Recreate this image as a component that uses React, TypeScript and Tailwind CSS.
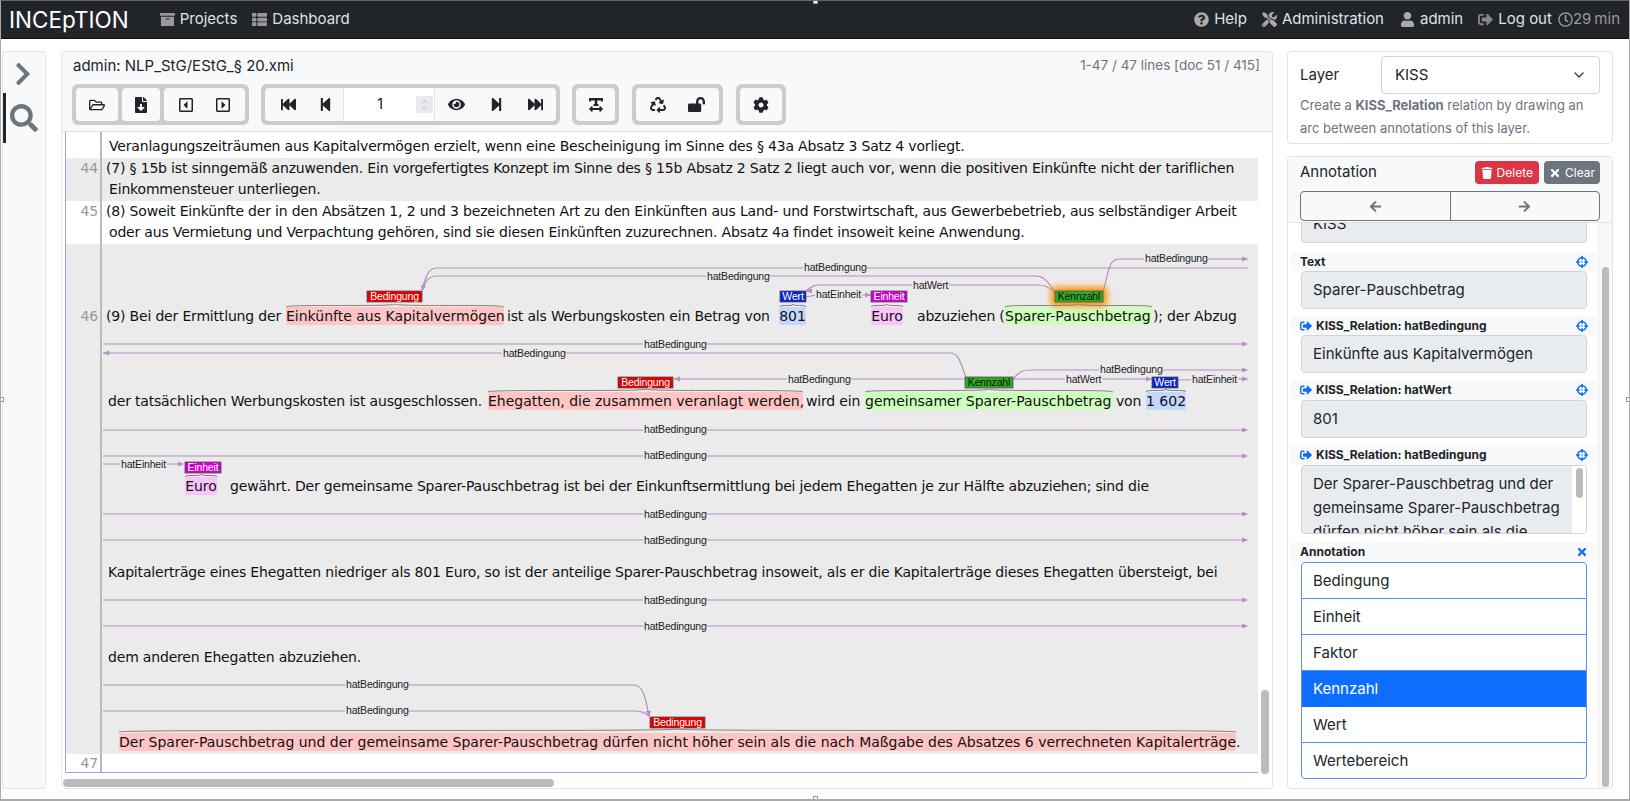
import { ChevronDown } from 'lucide-react';
import {
  FaArchive, FaThList, FaQuestionCircle, FaTools, FaUser, FaSignOutAlt, FaRegClock, FaChevronRight, FaSearch,
  FaRegFolderOpen, FaFileDownload, FaRegCaretSquareLeft, FaRegCaretSquareRight, FaFastBackward, FaStepBackward,
  FaEye, FaStepForward, FaFastForward, FaTextWidth, FaRecycle, FaLockOpen, FaCog, FaTrash, FaTimes, FaArrowLeft,
  FaArrowRight, FaCrosshairs,
} from 'react-icons/fa';

const ARC = '#b88cc4';

// page coordinates, the group in Arcs shifts them into the row
const straight: number[] = [343, 429, 455, 513, 539, 599, 625];

function Label({ x, y, w, text }: { x: number; y: number; w: number; text: string }) {
  return (
    <g>
      <rect x={x - 1} y={y - 6} width={w + 2} height={12} fill="#ebebeb" />
      <text x={x} y={y + 3.5} fontSize="10.5" fill="#222" fontFamily="Liberation Sans, sans-serif">{text}</text>
    </g>
  );
}

function Head({ x, y, dir }: { x: number; y: number; dir: 'r' | 'l' | 'd' | 'dl' }) {
  const pts = {
    r: `${x},${y} ${x - 6},${y - 2.5} ${x - 6},${y + 2.5}`,
    l: `${x},${y} ${x + 6},${y - 2.5} ${x + 6},${y + 2.5}`,
    d: `${x},${y} ${x - 3},${y - 6} ${x + 2},${y - 6}`,
    dl: `${x},${y} ${x - 1},${y - 6} ${x + 4},${y - 5}`,
  }[dir];
  return <polygon points={pts} fill={ARC} />;
}

function Box({ x, y, w, h, fill, color, text }: { x: number; y: number; w: number; h: number; fill: string; color: string; text: string }) {
  return (
    <g>
      <rect x={x} y={y} width={w} height={h} fill={fill} stroke="#555" strokeWidth="0.8" />
      <text x={x + w / 2} y={y + h - 2} fontSize="10.5" textAnchor="middle" fill={color} fontFamily="Liberation Sans, sans-serif">{text}</text>
    </g>
  );
}

function Brace({ x0, x1, y }: { x0: number; x1: number; y: number }) {
  const m = (x0 + x1) / 2;
  return (
    <path
      d={`M${x0},${y + 3} C${x0},${y} ${m},${y + 3} ${m},${y} C${m},${y + 3} ${x1},${y} ${x1},${y + 3}`}
      fill="none"
      stroke="#8d7d7d"
      strokeWidth="1"
    />
  );
}

function Arcs() {
  return (
    <svg className="absolute top-0 left-0 w-full h-full pointer-events-none">
      <defs>
        <filter id="glow" x="-40%" y="-100%" width="180%" height="300%">
          <feGaussianBlur stdDeviation="3" />
        </filter>
      </defs>
      <g transform="translate(-66,-243)">
        <g fill="none" stroke={ARC} strokeWidth="1.2">
          <path d="M1248,267 L436,267 C428,267 425,278 422,289" />
          <path d="M1036,275 L436,275 C428,275 425,282 422,289" />
          <path d="M1056,292 C1048,282 1045,275 1036,275" />
          <path d="M1103,291 C1109,270 1108,258 1120,258 L1247,258" />
          <path d="M1056,292 C1048,286 1046,284 1036,284 L820,284 C812,284 810,287 806,290" />
          <path d="M806,296 L816,294 M860,294 L871,294" />
          {straight.map(y => (
            <path key={y} d={`M103,${y} L1247,${y}`} />
          ))}
          <path d="M103,352 L950,352 C960,352 961,365 966,376" />
          <path d="M966,378 L674,378" />
          <path d="M1013,378 C1020,370 1022,369 1032,369 L1247,369" />
          <path d="M1013,378 L1152,378" />
          <path d="M1178,379 L1247,378" />
          <path d="M103,463 L183,463" />
          <path d="M103,684 L634,684 C644,684 646,700 649,715" />
          <path d="M103,710 L634,710 C642,710 645,712 649,715" />
        </g>
        <Head x={422} y={290} dir="dl" />
        <Head x={1248} y={258} dir="r" />
        <Head x={806} y={290} dir="l" />
        <Head x={871} y={294} dir="r" />
        {straight.map(y => (
          <Head key={y} x={1248} y={y} dir="r" />
        ))}
        <Head x={103} y={352} dir="l" />
        <Head x={674} y={378} dir="l" />
        <Head x={1248} y={369} dir="r" />
        <Head x={1152} y={378} dir="r" />
        <Head x={1248} y={378} dir="r" />
        <Head x={184} y={463} dir="r" />
        <Head x={649} y={716} dir="d" />

        <Label x={804} y={266} w={61} text="hatBedingung" />
        <Label x={707} y={275} w={61} text="hatBedingung" />
        <Label x={1145} y={257} w={61} text="hatBedingung" />
        <Label x={913} y={284} w={35} text="hatWert" />
        <Label x={816} y={293} w={45} text="hatEinheit" />
        <Label x={644} y={343} w={61} text="hatBedingung" />
        <Label x={503} y={352} w={61} text="hatBedingung" />
        <Label x={788} y={378} w={61} text="hatBedingung" />
        <Label x={1100} y={368} w={61} text="hatBedingung" />
        <Label x={1066} y={378} w={35} text="hatWert" />
        <Label x={1192} y={378} w={45} text="hatEinheit" />
        <Label x={644} y={428} w={61} text="hatBedingung" />
        <Label x={644} y={454} w={61} text="hatBedingung" />
        <Label x={121} y={463} w={45} text="hatEinheit" />
        <Label x={644} y={513} w={61} text="hatBedingung" />
        <Label x={644} y={539} w={61} text="hatBedingung" />
        <Label x={644} y={599} w={61} text="hatBedingung" />
        <Label x={644} y={625} w={61} text="hatBedingung" />
        <Label x={346} y={683} w={61} text="hatBedingung" />
        <Label x={346} y={709} w={61} text="hatBedingung" />

        <rect x={1051} y={286} width={56} height={19} rx={3} fill="#ff9000" filter="url(#glow)" />
        <Box x={367} y={290} w={55} h={11} fill="#e00000" color="#fff" text="Bedingung" />
        <Box x={780} y={290} w={26} h={11} fill="#0a22cc" color="#fff" text="Wert" />
        <Box x={871} y={290} w={36} h={11} fill="#cc00cc" color="#fff" text="Einheit" />
        <Box x={1055} y={290} w={48} h={11} fill="#2eaa22" color="#111" text="Kennzahl" />
        <Box x={618} y={376} w={55} h={11} fill="#e00000" color="#fff" text="Bedingung" />
        <Box x={965} y={376} w={48} h={11} fill="#2eaa22" color="#111" text="Kennzahl" />
        <Box x={1152} y={376} w={26} h={11} fill="#0a22cc" color="#fff" text="Wert" />
        <Box x={185} y={461} w={36} h={11} fill="#cc00cc" color="#fff" text="Einheit" />
        <Box x={650} y={716} w={55} h={11} fill="#e00000" color="#fff" text="Bedingung" />

        <Brace x0={286} x1={504} y={303} />
        <Brace x0={780} x1={806} y={303} />
        <Brace x0={871} x1={903} y={303} />
        <Brace x0={1005} x1={1152} y={303} />
        <Brace x0={488} x1={803} y={388} />
        <Brace x0={865} x1={1113} y={388} />
        <Brace x0={1146} x1={1186} y={388} />
        <Brace x0={185} x1={217} y={473} />
        <Brace x0={119} x1={1236} y={728} />
      </g>
    </svg>
  );
}

function ToolBtn({ children, w, gap }: { children: React.ReactNode; w: string; gap?: string }) {
  return <div className={`flex items-center justify-center h-full bg-[#f8f9fa] rounded-[4px] text-[#212529] text-[16px] ${w} ${gap ?? ''}`}>{children}</div>;
}

function FieldHead({ label, relation, h }: { label: string; relation?: boolean; h: string }) {
  return (
    <div className={`flex items-center ml-[3px] mr-[15px] pl-[9px] pr-[9px] bg-[#f8f9fa] text-[12px] font-bold text-[#212529] rounded-[3px] ${h}`}>
      {relation && <FaSignOutAlt className="text-[#0d6efd] text-[12px] mr-[4px]" />}
      <span>{label}</span>
      <FaCrosshairs className="ml-auto text-[#0d6efd] text-[12px]" />
    </div>
  );
}

function Field({ value }: { value: string }) {
  return (
    <div className="flex items-center h-[38px] ml-[13px] mr-[25px] px-[11px] bg-[#e9ecef] border border-[#ced4da] rounded-[4px] text-[15px] text-[#212529]">
      {value}
    </div>
  );
}

function Handle({ className }: { className: string }) {
  return <div className={`absolute w-[5px] h-[5px] bg-white border border-[#999] ${className}`} />;
}

export default function App() {
  return (
    <div className="relative h-[801px] overflow-hidden bg-white border-x border-t border-b-2 border-x-[#aaa] border-b-[#aaa] border-t-[#666] font-['Inter',sans-serif]">
      <nav className="flex items-center h-[38px] pl-[8px] pr-[9px] bg-[#212529] border-b border-[#111] text-[15px] text-[#dee2e6]">
        <span className="text-[22.5px] text-white mr-[31px]">INCEpTION</span>
        <span className="flex items-center gap-[5px] mr-[15px]"><FaArchive className="text-[#999]" />Projects</span>
        <span className="flex items-center gap-[5px]"><FaThList className="text-[#999]" />Dashboard</span>
        <div className="flex items-center ml-auto">
          <span className="flex items-center gap-[5px] mr-[15px]"><FaQuestionCircle className="text-[#aaa]" />Help</span>
          <span className="flex items-center gap-[5px] mr-[16px]"><FaTools className="text-[#aaa]" />Administration</span>
          <span className="flex items-center gap-[5px] mr-[15px]"><FaUser className="text-[#aaa]" />admin</span>
          <span className="flex items-center gap-[5px] mr-[6px]"><FaSignOutAlt className="text-[#888]" />Log out</span>
          <span className="flex items-center text-[#999]"><FaRegClock />29<span className="ml-[3px]">min</span></span>
        </div>
      </nav>

      <div className="flex pt-[12px] pl-[1px]">
        <aside className="w-[44px] h-[738px] mr-[15px] bg-[#f8f9fa] border border-[#e6e6e6] rounded-[3px] flex flex-col">
          <div className="flex justify-center pt-[9px] pr-[3px] h-[41px] text-[26px] text-[#6c757d]"><FaChevronRight /></div>
          <div className="flex items-center justify-center h-[50px] pr-[4px] border-l-[3px] border-[#212529] text-[28px] text-[#6c757d]"><FaSearch /></div>
        </aside>

        <main className="w-[1212px] h-[738px] mr-[14px] bg-[#f8f9fa] border border-[#e6e6e6] rounded-[4px] flex flex-col">
          <div className="flex justify-between h-[32px] pl-[11px] pr-[12px] pt-[3px] text-[15px] text-[#212529]">
            <span>admin: NLP_StG/EStG_§ 20.xmi</span>
            <span className="text-[13.5px] text-[#6c757d]">1-47 / 47 lines [doc 51 / 415]</span>
          </div>
          <div className="flex h-[41px] pl-[10px] gap-[12px]">
            <div className="flex w-[177px] gap-[4px] p-[4px] bg-[#ccc] rounded-[6px]">
              <ToolBtn w="w-[42px]"><FaRegFolderOpen /></ToolBtn>
              <ToolBtn w="w-[38px]"><FaFileDownload /></ToolBtn>
              <ToolBtn w="w-[81px]" gap="gap-[21px]"><FaRegCaretSquareLeft /><FaRegCaretSquareRight /></ToolBtn>
            </div>
            <div className="flex w-[299px] p-[4px] bg-[#ccc] rounded-[6px]">
              <div className="flex items-center h-full w-[78px] justify-center gap-[22px] pl-[6px] bg-[#f8f9fa] rounded-l-[4px] text-[#212529] text-[15px]"><FaFastBackward /><FaStepBackward /></div>
              <div className="flex items-center w-[92px] h-full pl-[33px] bg-white border-x border-[#e3e3e3] text-[15px] text-[#212529]">
                1
                <span className="flex flex-col items-center justify-center ml-auto mr-[1px] w-[17px] h-[17px] bg-[#e9e9ed] text-[#888]">
                  <ChevronDown className="w-[9px] h-[7px] rotate-180" /><ChevronDown className="w-[9px] h-[7px]" />
                </span>
              </div>
              <div className="flex items-center h-full w-[121px] justify-center gap-[24px] bg-[#f8f9fa] rounded-r-[4px] text-[#212529] text-[15px]"><FaEye className="text-[17px]" /><FaStepForward /><FaFastForward /></div>
            </div>
            <div className="flex w-[47px] p-[4px] bg-[#ccc] rounded-[6px]"><ToolBtn w="w-full"><FaTextWidth /></ToolBtn></div>
            <div className="flex w-[91px] ml-[1px] p-[4px] bg-[#ccc] rounded-[6px]"><ToolBtn w="w-full" gap="gap-[22px]"><FaRecycle /><FaLockOpen className="text-[17px]" /></ToolBtn></div>
            <div className="flex w-[50px] ml-[1px] p-[4px] bg-[#ccc] rounded-[6px]"><ToolBtn w="w-full"><FaCog /></ToolBtn></div>
          </div>

          <div className="relative flex-1 mt-[6px] bg-white border-t border-[#e0e0e0] overflow-hidden font-['DejaVu_Sans',sans-serif] text-[14px] text-[#111] tracking-[-0.18px]">
            <div className="ml-[3px] mr-[14px] border-l border-b border-[#8fa8ef] h-[641px] overflow-hidden">
              <div className="flex h-[26px]">
                <div className="w-[36px] border-r-2 border-[#bbb]" />
                <div className="pl-[7px] pt-[4px] leading-[21px] whitespace-nowrap">Veranlagungszeiträumen aus Kapitalvermögen erzielt, wenn eine Bescheinigung im Sinne des § 43a Absatz 3 Satz 4 vorliegt.</div>
              </div>
              <div className="flex h-[43px] bg-[#ebebeb]">
                <div className="w-[36px] pr-[2px] text-right border-r-2 border-[#bbb] text-[#999] leading-[21px]">44</div>
                <div className="pl-[4px] leading-[21px] whitespace-nowrap">
                  <div>(7) § 15b ist sinngemäß anzuwenden. Ein vorgefertigtes Konzept im Sinne des § 15b Absatz 2 Satz 2 liegt auch vor, wenn die positiven Einkünfte nicht der tariflichen</div>
                  <div className="pl-[3px]">Einkommensteuer unterliegen.</div>
                </div>
              </div>
              <div className="flex h-[43px]">
                <div className="w-[36px] pr-[2px] text-right border-r-2 border-[#bbb] text-[#999] leading-[21px]">45</div>
                <div className="pl-[4px] leading-[21px] whitespace-nowrap">
                  <div>(8) Soweit Einkünfte der in den Absätzen 1, 2 und 3 bezeichneten Art zu den Einkünften aus Land- und Forstwirtschaft, aus Gewerbebetrieb, aus selbständiger Arbeit</div>
                  <div className="pl-[3px]">oder aus Vermietung und Verpachtung gehören, sind sie diesen Einkünften zuzurechnen. Absatz 4a findet insoweit keine Anwendung.</div>
                </div>
              </div>

              <div className="relative flex h-[510px] bg-[#ebebeb]">
                <div className="w-[36px] pr-[2px] text-right border-r-2 border-[#bbb] text-[#999] pt-[63px] leading-[18px]">46</div>
                <div className="flex-1 leading-[18px] whitespace-nowrap">
                  <div className="flex mt-[63px] pl-[4px]">
                    <span className="w-[180px]">(9) Bei der Ermittlung der</span>
                    <span className="w-[218px] bg-[#ffc4c4] rounded-[2px] tracking-normal">Einkünfte aus Kapitalvermögen</span>
                    <span className="w-[275px] pl-[3px]">ist als Werbungskosten ein Betrag von</span>
                    <span className="w-[27px] bg-[#c4d8ff] rounded-[2px] text-center tracking-normal">801</span>
                    <span className="w-[65px]" />
                    <span className="w-[32px] bg-[#f9c4f9] rounded-[2px] text-center tracking-normal">Euro</span>
                    <span className="w-[102px] pl-[14px]">abzuziehen (</span>
                    <span className="w-[147px] bg-[#ccffbb] rounded-[2px] tracking-normal">Sparer-Pauschbetrag</span>
                    <span className="pl-[1px]">); der Abzug</span>
                  </div>
                  <div className="flex mt-[67px] pl-[6px]">
                    <span className="w-[380px]">der tatsächlichen Werbungskosten ist ausgeschlossen.</span>
                    <span className="w-[315px] bg-[#ffc4c4] rounded-[2px] tracking-normal">Ehegatten, die zusammen veranlagt werden,</span>
                    <span className="w-[62px] pl-[3px]">wird ein</span>
                    <span className="w-[248px] bg-[#ccffbb] rounded-[2px] tracking-normal">gemeinsamer Sparer-Pauschbetrag</span>
                    <span className="w-[33px] pl-[3px]">von</span>
                    <span className="w-[40px] bg-[#c4d8ff] rounded-[2px] text-center tracking-normal">1 602</span>
                  </div>
                  <div className="flex mt-[67px] pl-[83px]">
                    <span className="w-[32px] bg-[#f9c4f9] rounded-[2px] text-center tracking-normal">Euro</span>
                    <span className="pl-[13px]">gewährt. Der gemeinsame Sparer-Pauschbetrag ist bei der Einkunftsermittlung bei jedem Ehegatten je zur Hälfte abzuziehen; sind die</span>
                  </div>
                  <div className="mt-[68px] pl-[6px]">Kapitalerträge eines Ehegatten niedriger als 801 Euro, so ist der anteilige Sparer-Pauschbetrag insoweit, als er die Kapitalerträge dieses Ehegatten übersteigt, bei</div>
                  <div className="mt-[67px] pl-[6px]">dem anderen Ehegatten abzuziehen.</div>
                  <div className="flex mt-[67px] pl-[17px]">
                    <span className="w-[1117px] bg-[#ffc4c4] rounded-[2px] tracking-normal">Der Sparer-Pauschbetrag und der gemeinsame Sparer-Pauschbetrag dürfen nicht höher sein als die nach Maßgabe des Absatzes 6 verrechneten Kapitalerträge</span>
                    <span>.</span>
                  </div>
                </div>
                <Arcs />
              </div>

              <div className="flex h-[19px]">
                <div className="w-[36px] pr-[2px] text-right border-r-2 border-[#bbb] text-[#999] leading-[19px]">47</div>
              </div>
            </div>
            <div className="absolute right-[3px] top-[558px] w-[8px] h-[84px] bg-[#bbb] rounded-[4px]" />
            <div className="absolute left-[1px] top-[647px] w-[491px] h-[8px] bg-[#bbb] rounded-[4px]" />
          </div>
        </main>

        <aside className="w-[326px] flex flex-col gap-[12px]">
          <div className="h-[93px] bg-white border border-[#e3e3e3] rounded-[4px] px-[12px] pt-[4px]">
            <div className="flex items-center h-[38px]">
              <span className="w-[81px] text-[15px] text-[#212529]">Layer</span>
              <div className="flex items-center flex-1 h-[38px] pl-[13px] pr-[12px] border border-[#ced4da] rounded-[4px] text-[15px] text-[#212529]">
                KISS
                <ChevronDown className="ml-auto w-[16px] h-[16px] text-[#343a40]" />
              </div>
            </div>
            <p className="text-[13px] leading-[23px] text-[#6c757d]">
              Create a <b>KISS_Relation</b> relation by drawing an arc between annotations of this layer.
            </p>
          </div>

          <div className="relative h-[633px] bg-white border border-[#e3e3e3] rounded-[4px] flex flex-col overflow-hidden">
            <div className="h-[66px] bg-[#f8f9fa] border-b border-[#e3e3e3] px-[12px] pt-[1px] shrink-0">
              <div className="flex items-center h-[29px] mb-[4px] text-[15px] text-[#212529]">
                Annotation
                <span className="flex items-center gap-[4px] h-[23px] ml-auto px-[6px] bg-[#dc3545] rounded-[4px] text-white text-[12px]"><FaTrash className="text-[12px]" />Delete</span>
                <span className="flex items-center gap-[4px] h-[23px] ml-[5px] px-[5px] bg-[#6c757d] rounded-[4px] text-white text-[12px]"><FaTimes className="text-[12px]" />Clear</span>
              </div>
              <div className="flex h-[30px] border border-[#6c757d] rounded-[4px] text-[#6c757d] text-[13px]">
                <div className="flex flex-1 items-center justify-center border-r border-[#6c757d]"><FaArrowLeft /></div>
                <div className="flex flex-1 items-center justify-center"><FaArrowRight /></div>
              </div>
            </div>
            <div className="flex-1 overflow-hidden">
              <div className="-mt-[18px]"><Field value="KISS" /></div>
              <div className="mt-[9px]"><FieldHead h="h-[19px]" label="Text" /></div>
              <Field value="Sparer-Pauschbetrag" />
              <div className="mt-[7px]"><FieldHead h="h-[19px]" label="KISS_Relation: hatBedingung" relation /></div>
              <Field value="Einkünfte aus Kapitalvermögen" />
              <div className="mt-[7px]"><FieldHead h="h-[20px]" label="KISS_Relation: hatWert" relation /></div>
              <Field value="801" />
              <div className="mt-[7px]"><FieldHead h="h-[20px]" label="KISS_Relation: hatBedingung" relation /></div>
              <div className="relative h-[69px] ml-[13px] mr-[25px] pl-[11px] pr-[24px] pt-[6px] bg-[#e9ecef] border border-[#ced4da] rounded-[4px] text-[15px] leading-[24px] text-[#212529] overflow-hidden">
                Der Sparer-Pauschbetrag und der gemeinsame Sparer-Pauschbetrag dürfen nicht höher sein als die
                <div className="absolute top-0 right-0 w-[14px] h-full bg-white"><div className="mx-auto mt-[2px] w-[7px] h-[30px] bg-[#bbb] rounded-[4px]" /></div>
              </div>
              <div className="flex items-center h-[20px] mt-[8px] ml-[3px] mr-[15px] pl-[9px] pr-[9px] bg-[#f8f9fa] text-[12px] font-bold text-[#212529] rounded-[3px]">
                Annotation
                <FaTimes className="ml-auto text-[#0d6efd] text-[12px]" />
              </div>
              <div className="ml-[13px] mr-[25px] border border-[#5b8ef5] rounded-[4px] overflow-hidden text-[15px] text-[#212529]">
                <div className="flex items-center h-[36px] pt-[1px] px-[11px] border-b border-[#5b8ef5]">Bedingung</div>
                <div className="flex items-center h-[36px] pt-[1px] px-[11px] border-b border-[#5b8ef5]">Einheit</div>
                <div className="flex items-center h-[36px] pt-[1px] px-[11px] border-b border-[#5b8ef5]">Faktor</div>
                <div className="flex items-center h-[36px] px-[11px] bg-[#0d6efd] text-white">Kennzahl</div>
                <div className="flex items-center h-[36px] pt-[1px] px-[11px] border-b border-[#5b8ef5]">Wert</div>
                <div className="flex items-center h-[35px] pt-[1px] px-[11px]">Wertebereich</div>
              </div>
            </div>
            <div className="absolute top-[66px] bottom-0 right-0 w-[14px] bg-[#f8f8f8] border-l border-[#eee]">
              <div className="absolute top-[44px] bottom-[1px] right-[3px] w-[7px] bg-[#bbb] rounded-[4px]" />
            </div>
          </div>
        </aside>
      </div>

      <Handle className="top-[-2px] left-[812px]" />
      <Handle className="bottom-[-2px] left-[812px]" />
      <Handle className="top-[396px] left-[-2px]" />
      <Handle className="top-[396px] right-[-2px]" />
    </div>
  );
}
